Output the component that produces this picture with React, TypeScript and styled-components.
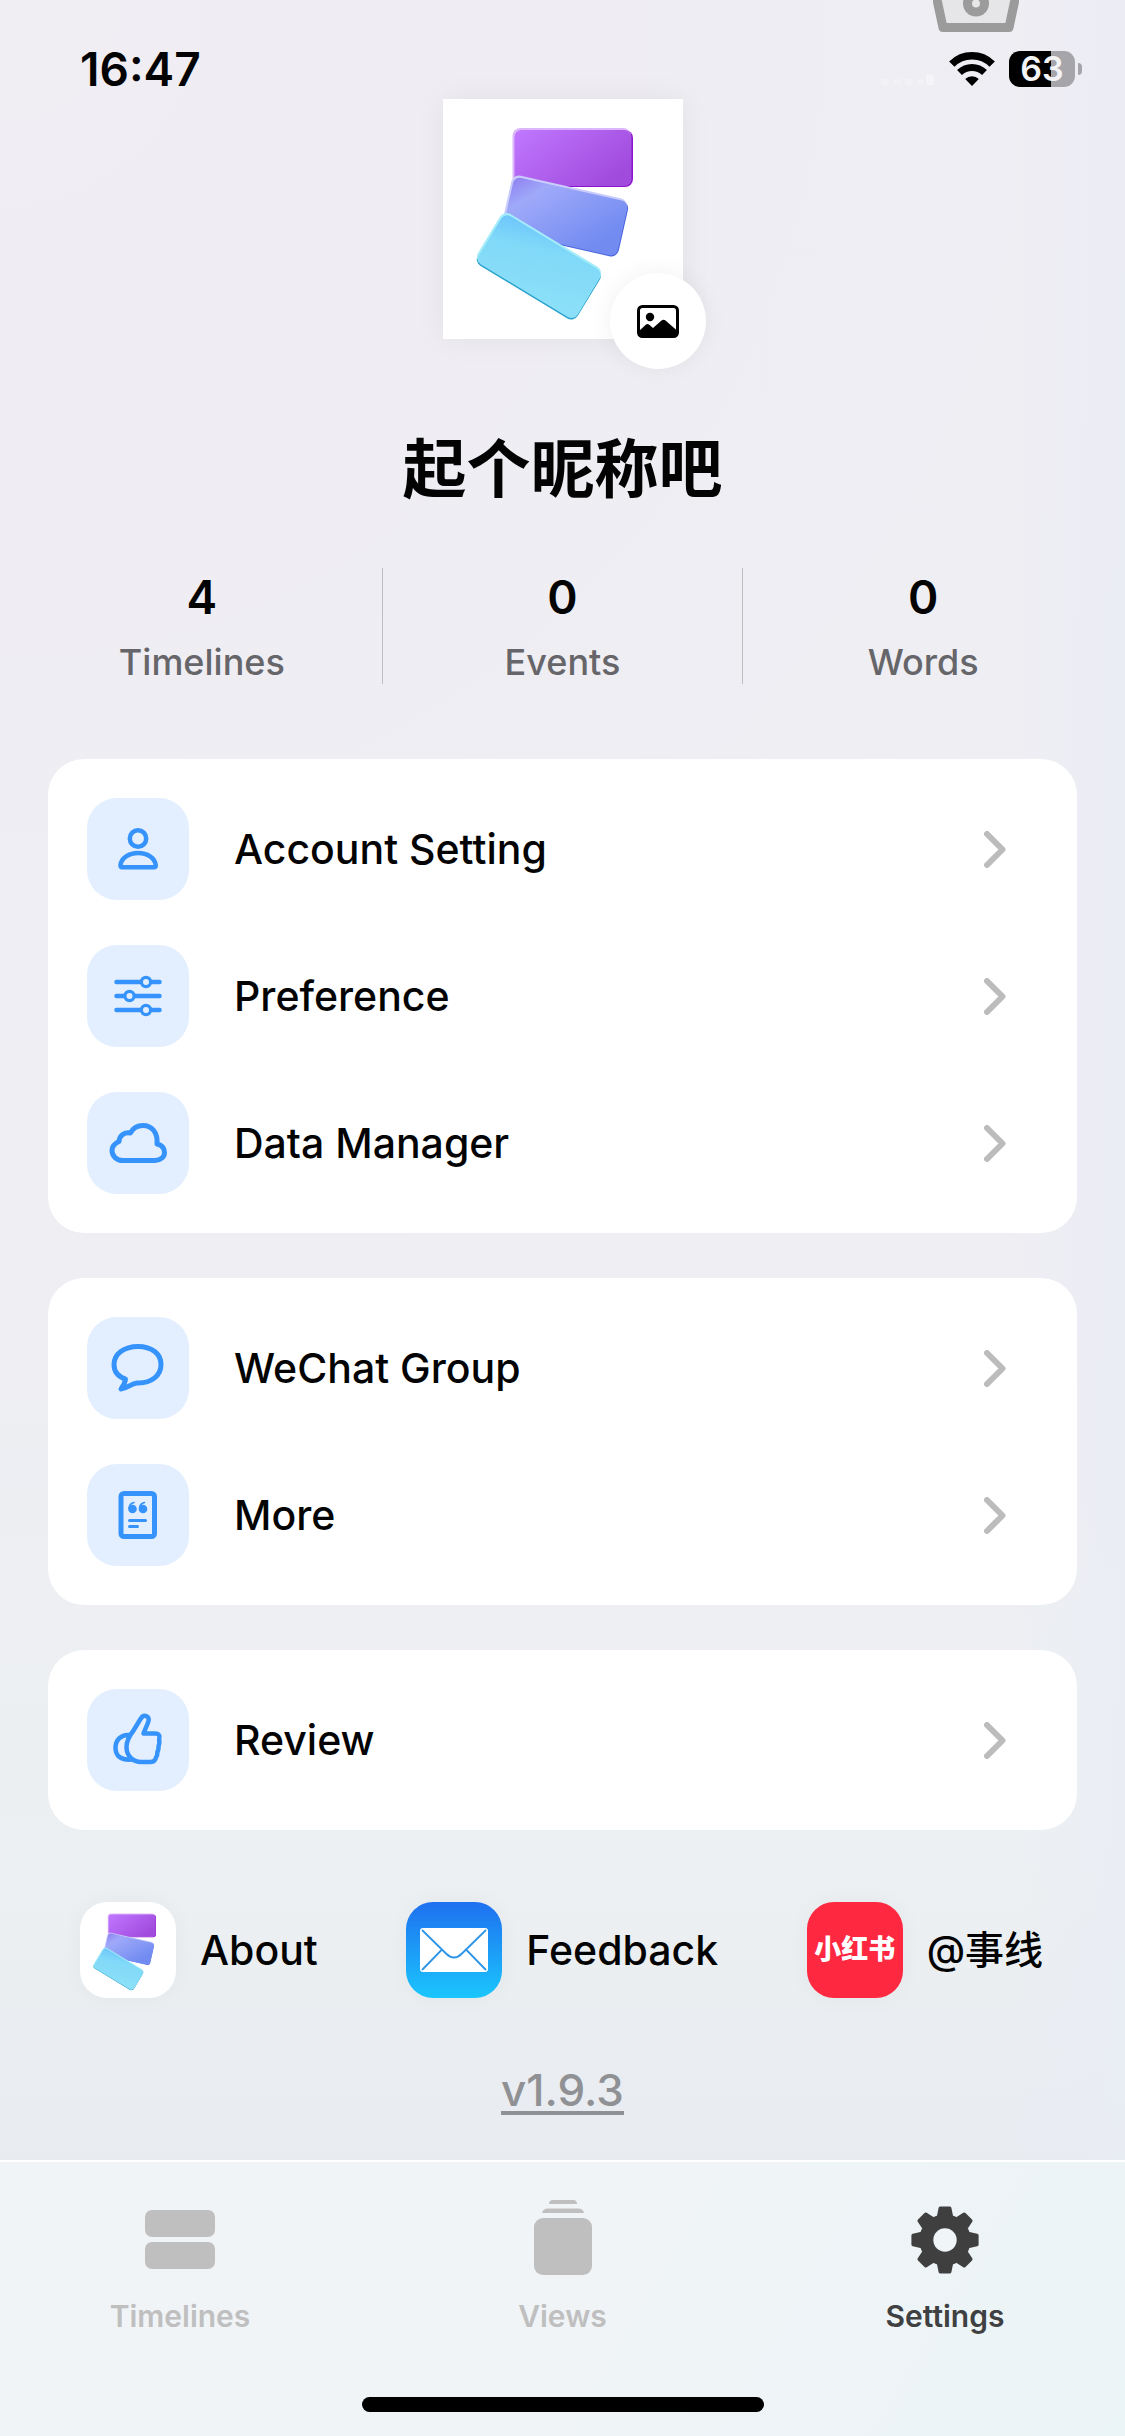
import React from "react";
import styled, { createGlobalStyle } from "styled-components";

const ink = "#030304";
const blue = "#3593fb";
const muted = "#bfbfc0";

const GlobalStyle = createGlobalStyle`
  *, *::before, *::after { box-sizing: border-box; }
  body {
    margin: 0;
    color: ${ink};
    font-family: Inter, "Noto Sans CJK SC", sans-serif;
    background: #eeeef3;
  }
  button { font: inherit; color: inherit; border: 0; padding: 0; background: none; cursor: pointer; }
  a { color: inherit; text-decoration: none; }
  svg { display: block; flex: none; }
`;

const Screen = styled.div`
  position: relative;
  display: flex;
  flex-direction: column;
  min-height: 100vh;
  overflow: hidden;
  background:
    radial-gradient(circle at 0 0, rgba(243, 236, 243, 0.4), rgba(243, 236, 243, 0) 50%),
    linear-gradient(90deg, rgba(232, 236, 248, 0) 90%, rgba(232, 236, 248, 0.4)),
    linear-gradient(180deg, #eeeef3 0%, #eeeef3 55%, #ecf0f2 78%, #e8ebf0 89%);
`;

const BasketButton = styled.button`
  position: absolute;
  top: 0;
  right: 106px;
`;

const StatusBar = styled.header`
  display: flex;
  justify-content: space-between;
  align-items: center;
  height: 99px;
  padding: 39px 43px 0 80px;
`;

const Clock = styled.time`
  font-size: 46px;
  line-height: 56px;
  font-weight: 600;
`;

const StatusIcons = styled.div`
  display: flex;
  align-items: center;
  gap: 14px;
`;

const Battery = styled.div`
  display: flex;
  align-items: center;
  gap: 3px;
`;

const BatteryBody = styled.span`
  width: 66px;
  height: 36px;
  border-radius: 11px;
  background: linear-gradient(90deg, #000 64%, #a5a5aa 64%);
  color: #f4f4f6;
  font-size: 34px;
  line-height: 36px;
  font-weight: 600;
  text-align: center;
`;

const BatteryNub = styled.span`
  width: 4px;
  height: 12px;
  border-radius: 0 6px 6px 0;
  background: #a5a5aa;
`;

const Main = styled.main`
  display: flex;
  flex-direction: column;
  align-items: center;
`;

const Avatar = styled.div`
  position: relative;
  width: 240px;
  height: 240px;
  background: #fff;
  box-shadow: 0 0 30px rgba(0, 0, 0, 0.06);
`;

const AvatarEdit = styled.button`
  position: absolute;
  right: -23px;
  bottom: -30px;
  display: flex;
  align-items: center;
  justify-content: center;
  width: 96px;
  height: 96px;
  border-radius: 50%;
  background: #fff;
  box-shadow: 0 0 24px rgba(0, 0, 0, 0.06);
`;

const Nickname = styled.h1`
  margin: 82px 0 0;
  font-size: 64px;
  line-height: 96px;
  font-weight: 600;
`;

const Stats = styled.dl`
  display: flex;
  align-self: stretch;
  margin: 51px 22px 0;
`;

const Stat = styled.div`
  flex: 1;
  display: flex;
  flex-direction: column-reverse;
  align-items: center;
  gap: 16px;
  height: 116px;
  & + & { border-left: 1px solid #bdbdc2; }
`;

const StatValue = styled.dd`
  margin: 0;
  font-size: 46px;
  line-height: 56px;
  font-weight: 600;
`;

const StatLabel = styled.dt`
  color: #66666a;
  font-size: 36px;
  line-height: 43px;
  font-weight: 500;
`;

const Groups = styled.div`
  display: flex;
  flex-direction: column;
  align-self: stretch;
  gap: 45px;
  margin: 75px 48px 0;
`;

const Card = styled.section`
  display: flex;
  flex-direction: column;
  gap: 45px;
  padding: 39px;
  border-radius: 36px;
  background: #fff;
`;

const Row = styled.button`
  display: flex;
  align-items: center;
  gap: 45px;
  padding-right: 32px;
  text-align: left;
`;

const IconTile = styled.span`
  width: 102px;
  height: 102px;
  border-radius: 30px;
  background: #e3efff;
`;

const RowLabel = styled.span`
  flex: 1;
  font-size: 41px;
  line-height: 52px;
  font-weight: 500;
`;

const Links = styled.nav`
  display: flex;
  align-self: stretch;
  justify-content: space-between;
  margin: 72px 82px 0 80px;
`;

const AppLink = styled.a`
  display: flex;
  align-items: center;
  gap: 24px;
  font-size: 41px;
  line-height: 52px;
  font-weight: 500;
  &:lang(zh) { font-size: 39px; }
`;

const AppIcon = styled.span<{ $fill: string }>`
  display: flex;
  align-items: center;
  justify-content: center;
  width: 96px;
  height: 96px;
  border-radius: 27px;
  background: ${(p) => p.$fill};
  color: #fff;
  font-size: 27px;
  line-height: 32px;
  font-weight: 900;
  box-shadow: 0 0 24px rgba(0, 0, 0, 0.04);
`;

const Version = styled.a`
  margin-top: 71px;
  border-bottom: 4px solid #8f9194;
  color: #8f9194;
  font-size: 44px;
  line-height: 42px;
  font-weight: 500;
`;

const TabBar = styled.nav`
  display: flex;
  flex-direction: column;
  align-items: center;
  justify-content: space-between;
  height: 276px;
  margin-top: auto;
  padding: 34px 0 24px;
  border-top: 2px solid #fff;
  background: linear-gradient(120deg, #f0f4f7 55%, #ebf4f6);
`;

const Tabs = styled.div`
  display: flex;
  justify-content: space-between;
  align-self: stretch;
  padding: 0 100px;
`;

const Tab = styled.a<{ $active?: boolean }>`
  display: flex;
  flex-direction: column;
  align-items: center;
  gap: 20px;
  width: 160px;
  color: ${(p) => (p.$active ? "#3f4042" : muted)};
  font-size: 30px;
  line-height: 40px;
  font-weight: 600;
`;

const HomeIndicator = styled.div`
  width: 402px;
  height: 15px;
  border-radius: 8px;
  background: #000;
`;

function CardsLogo({ size, id }: { size: number; id: string }) {
  return (
    <svg width={size} height={size} viewBox="0 0 240 240" aria-hidden="true">
      <defs>
        <linearGradient id={`${id}-p`} x1="0" y1="0" x2="1" y2="0.6">
          <stop offset="0" stopColor="#c078ff" />
          <stop offset="1" stopColor="#a14bdd" />
        </linearGradient>
        <linearGradient id={`${id}-b`} x1="0" y1="0" x2="1" y2="0.5">
          <stop offset="0" stopColor="#8f80f0" />
          <stop offset="0.25" stopColor="#9fa9f9" />
          <stop offset="1" stopColor="#718bf1" />
        </linearGradient>
        <linearGradient id={`${id}-c`} x1="0" y1="0" x2="0.7" y2="1">
          <stop offset="0" stopColor="#6cc5fb" />
          <stop offset="0.35" stopColor="#80d9f8" />
          <stop offset="1" stopColor="#8bdff8" />
        </linearGradient>
      </defs>
      <rect x="71" y="31" width="119" height="57" rx="8" fill="#8a14cf" />
      <rect x="69.500" y="29" width="118.500" height="57" rx="8" fill="#dcb6fb" />
      <rect x="71.500" y="31" width="117" height="56" rx="7" fill={`url(#${id}-p)`} />
      <g transform="translate(70 75) rotate(12.700)">
        <rect x="1" y="2" width="119" height="57" rx="8" fill="#4862df" />
        <rect width="118.500" height="57" rx="8" fill="#c9ccfc" />
        <rect x="2" y="2" width="117" height="56" rx="7" fill={`url(#${id}-b)`} />
      </g>
      <g transform="translate(61 111) rotate(31.200)">
        <rect x="1" y="2" width="117" height="58" rx="8" fill="#2ba3cc" />
        <rect width="117" height="58" rx="8" fill="#a6edfa" />
        <rect x="2" y="2" width="115" height="56.500" rx="7" fill={`url(#${id}-c)`} />
      </g>
    </svg>
  );
}

function Basket() {
  return (
    <svg width="86" height="32" viewBox="0 0 86 32" aria-hidden="true">
      <path d="M-1 -14 8.500 24.500Q9 27.500 11 27.500H75Q77 27.500 77.500 24.500L87 -14Z" fill="#e6e6e8" />
      <path d="M3 -5 10 27.500H76L83 -5" fill="none" stroke="#9b9b9c" strokeWidth="9" strokeLinejoin="round" />
      <circle cx="43" cy="3.500" r="8.500" fill="#e6e6e8" stroke="#9b9b9c" strokeWidth="9" />
    </svg>
  );
}

function Signal() {
  return (
    <svg width="54" height="34" viewBox="0 0 54 34" fill="#f2f2f6" aria-hidden="true">
      <rect x="0" y="27" width="8" height="6" rx="2" />
      <rect x="12" y="27" width="8" height="6" rx="2" />
      <rect x="24" y="27" width="8" height="6" rx="2" />
      <rect x="36" y="27" width="7" height="6" rx="2" />
      <rect x="45" y="23" width="8" height="10" rx="2" fill="#f5f5f8" />
    </svg>
  );
}

function Wifi() {
  return (
    <svg width="46" height="34" viewBox="0 0 46 34" aria-hidden="true">
      <path d="M2.800 12.200A28.500 28.500 0 0 1 43.200 12.200" fill="none" stroke="#000" strokeWidth="7.500" />
      <path d="M10.500 20.500A18 18 0 0 1 35.500 20.500" fill="none" stroke="#000" strokeWidth="7" />
      <path d="M23 34 16.200 27A10 10 0 0 1 29.800 27Z" />
    </svg>
  );
}

function PictureIcon() {
  return (
    <svg width="42" height="33" viewBox="0 0 42 33" aria-hidden="true">
      <rect x="1.500" y="1.500" width="39" height="30" rx="4" fill="none" stroke="#000" strokeWidth="3" />
      <circle cx="13" cy="12" r="4.200" />
      <path d="M2 26 9 19.500Q10.500 18.500 12 19.500L16 23 24.500 15.500Q26.500 14 28.500 15.500L40 25.500V28Q40 31.500 37 31.500H5Q2 31.500 2 28Z" />
    </svg>
  );
}

function Chevron() {
  return (
    <svg width="22" height="37" viewBox="0 0 22 37" aria-hidden="true">
      <path d="M3 3 18.500 18.500 3 34" fill="none" stroke="#bcbcbd" strokeWidth="6" strokeLinecap="round" strokeLinejoin="round" />
    </svg>
  );
}

function Glyph({ children, weight = 4.5 }: { children: React.ReactNode; weight?: number }) {
  return (
    <svg width="102" height="102" viewBox="0 0 102 102" fill="none" stroke={blue} strokeWidth={weight} strokeLinecap="round" strokeLinejoin="round" aria-hidden="true">
      {children}
    </svg>
  );
}

const personGlyph = (
  <Glyph>
    <circle cx="51" cy="40.500" r="8.200" />
    <path d="M35 69.300H67.500Q69 69.300 68.700 67C67.800 60 60.500 55 51.200 55S34.300 60 33.500 67Q33.300 69.300 35 69.300Z" />
  </Glyph>
);

const slidersGlyph = (
  <Glyph>
    <path d="M29.500 37H72.500M29.500 51H72.500M29.500 65H72.500" />
    <g fill="#e3efff" strokeWidth="3.200">
      <circle cx="59" cy="37" r="4.600" />
      <circle cx="42.500" cy="51" r="4.600" />
      <circle cx="59" cy="65" r="4.600" />
    </g>
  </Glyph>
);

const cloudGlyph = (
  <Glyph weight={5}>
    <path d="M36 68.500C29.500 68.500 25 64 25 58.500C25 54.500 27.500 51.500 32 49.500C32.500 43.500 37.500 39.800 43.500 41C46 36 50.500 33.500 56 33.500C64.500 33.500 71 40 70 52C74.500 53 77.500 56 77.500 60.500C77.500 65 73.500 68.500 68 68.500Z" />
  </Glyph>
);

const bubbleGlyph = (
  <Glyph weight={5}>
    <path d="M50 66C65 66.500 74 58 74 47.500C74 37 65 29.500 51 29.500S27 37 27 47.500C27 54 31 59.500 38.500 62C38 66.500 36 69.500 34 72C40.500 71.500 44 66.500 50 66Z" />
  </Glyph>
);

const noteGlyph = (
  <Glyph weight={5}>
    <rect x="34" y="29.500" width="33.500" height="43" rx="3" />
    <path d="M42.500 56.500H58.500M42.500 62.500H50.500" strokeWidth="3" />
    <g fill={blue} stroke="none">
      <circle cx="45.500" cy="45" r="4.300" />
      <circle cx="56" cy="45" r="4.300" />
    </g>
    <path d="M42 44Q42.500 39.500 47 38.500M52.500 44Q53 39.500 57.500 38.500" strokeWidth="1.600" />
  </Glyph>
);

const thumbGlyph = (
  <Glyph>
    <path d="M56.500 27C59.500 26 62.500 28.500 61.500 32C60.500 36 58 40 56.500 44.500H69C72 44.500 73 47 72.300 49.500C71.800 52 73 52.500 72 55.500C71 58 72 59.500 71 61.500C69.500 64 71 65.500 69.500 67.500C68 69 69.500 73 63 73H54C46 73 39.500 67 39.500 58C39.500 51 43 46 46.500 41.500L53.500 30Q55 27.500 56.500 27Z" />
    <path d="M43 46C34 45 28.500 51 28.500 59S34 71.500 45 70.500" />
  </Glyph>
);

function MailIcon() {
  return (
    <svg width="96" height="96" viewBox="0 0 96 96" aria-hidden="true">
      <rect x="14" y="26" width="68" height="44" rx="3" fill="#fff" />
      <path d="M16 28 40 51.500Q48 59.500 56 51.500L80 28M35.500 48 16 68M60.500 48 80 68" fill="none" stroke="#2e95e6" strokeWidth="1.800" />
    </svg>
  );
}

function TimelinesIcon() {
  return (
    <svg width="70" height="80" viewBox="0 0 70 80" fill={muted} aria-hidden="true">
      <rect y="14" width="70" height="27" rx="7" />
      <rect y="46" width="70" height="27" rx="7" />
    </svg>
  );
}

function ViewsIcon() {
  return (
    <svg width="58" height="80" viewBox="0 0 58 80" fill={muted} aria-hidden="true">
      <path d="M15 8Q15 4 19 4H39Q43 4 43 8Z" />
      <path d="M8 17Q9 12.500 14 12.500H44Q49 12.500 50 17Z" />
      <rect y="22" width="58" height="57" rx="9" />
    </svg>
  );
}

/* Eight evenly spaced teeth: each tooth gives two base and two tip corners. */
const gearPoints = Array.from({ length: 8 }, (_, i) => {
  const a = (i * Math.PI) / 4;
  return [[-6.4, 23.2], [-4.6, 31.8], [4.6, 31.8], [6.4, 23.2]]
    .map(([x, y]) => `${(x * Math.cos(a) + y * Math.sin(a)).toFixed(2)},${(x * Math.sin(a) - y * Math.cos(a)).toFixed(2)}`)
    .join(" ");
}).join(" ");

function GearIcon() {
  return (
    <svg width="68" height="80" viewBox="-34 -44 68 80" aria-hidden="true">
      <polygon points={gearPoints} fill="#3f3f40" stroke="#3f3f40" strokeWidth="3.600" strokeLinejoin="round" />
      <circle r="11.700" fill="#f0f5f7" />
    </svg>
  );
}

const stats = [
  { label: "Timelines", value: 4 },
  { label: "Events", value: 0 },
  { label: "Words", value: 0 },
];

const groups = [
  [
    { label: "Account Setting", glyph: personGlyph },
    { label: "Preference", glyph: slidersGlyph },
    { label: "Data Manager", glyph: cloudGlyph },
  ],
  [
    { label: "WeChat Group", glyph: bubbleGlyph },
    { label: "More", glyph: noteGlyph },
  ],
  [{ label: "Review", glyph: thumbGlyph }],
];

export default function App() {
  return (
    <>
      <GlobalStyle />
      <Screen>
        <BasketButton type="button" aria-label="Store"><Basket /></BasketButton>
        <StatusBar>
          <Clock>16:47</Clock>
          <StatusIcons>
            <Signal />
            <Wifi />
            <Battery>
              <BatteryBody>63</BatteryBody>
              <BatteryNub />
            </Battery>
          </StatusIcons>
        </StatusBar>
        <Main>
          <Avatar>
            <CardsLogo size={240} id="avatar" />
            <AvatarEdit type="button" aria-label="Change picture"><PictureIcon /></AvatarEdit>
          </Avatar>
          <Nickname lang="zh">起个昵称吧</Nickname>
          <Stats>
            {stats.map((s) => (
              <Stat key={s.label}>
                <StatLabel>{s.label}</StatLabel>
                <StatValue>{s.value}</StatValue>
              </Stat>
            ))}
          </Stats>
          <Groups>
            {groups.map((rows, i) => (
              <Card key={i}>
                {rows.map((r) => (
                  <Row type="button" key={r.label}>
                    <IconTile>{r.glyph}</IconTile>
                    <RowLabel>{r.label}</RowLabel>
                    <Chevron />
                  </Row>
                ))}
              </Card>
            ))}
          </Groups>
          <Links>
            <AppLink href="#about">
              <AppIcon $fill="#fff"><CardsLogo size={96} id="about" /></AppIcon>
              About
            </AppLink>
            <AppLink href="#feedback">
              <AppIcon $fill="linear-gradient(180deg, #1e70f0, #1bc6fd)"><MailIcon /></AppIcon>
              Feedback
            </AppLink>
            <AppLink href="#social" lang="zh">
              <AppIcon $fill="#ff2841">小红书</AppIcon>
              @事线
            </AppLink>
          </Links>
          <Version href="#version">v1.9.3</Version>
        </Main>
        <TabBar>
          <Tabs>
            <Tab href="#timelines"><TimelinesIcon />Timelines</Tab>
            <Tab href="#views"><ViewsIcon />Views</Tab>
            <Tab href="#settings" $active aria-current="page"><GearIcon />Settings</Tab>
          </Tabs>
          <HomeIndicator />
        </TabBar>
      </Screen>
    </>
  );
}
